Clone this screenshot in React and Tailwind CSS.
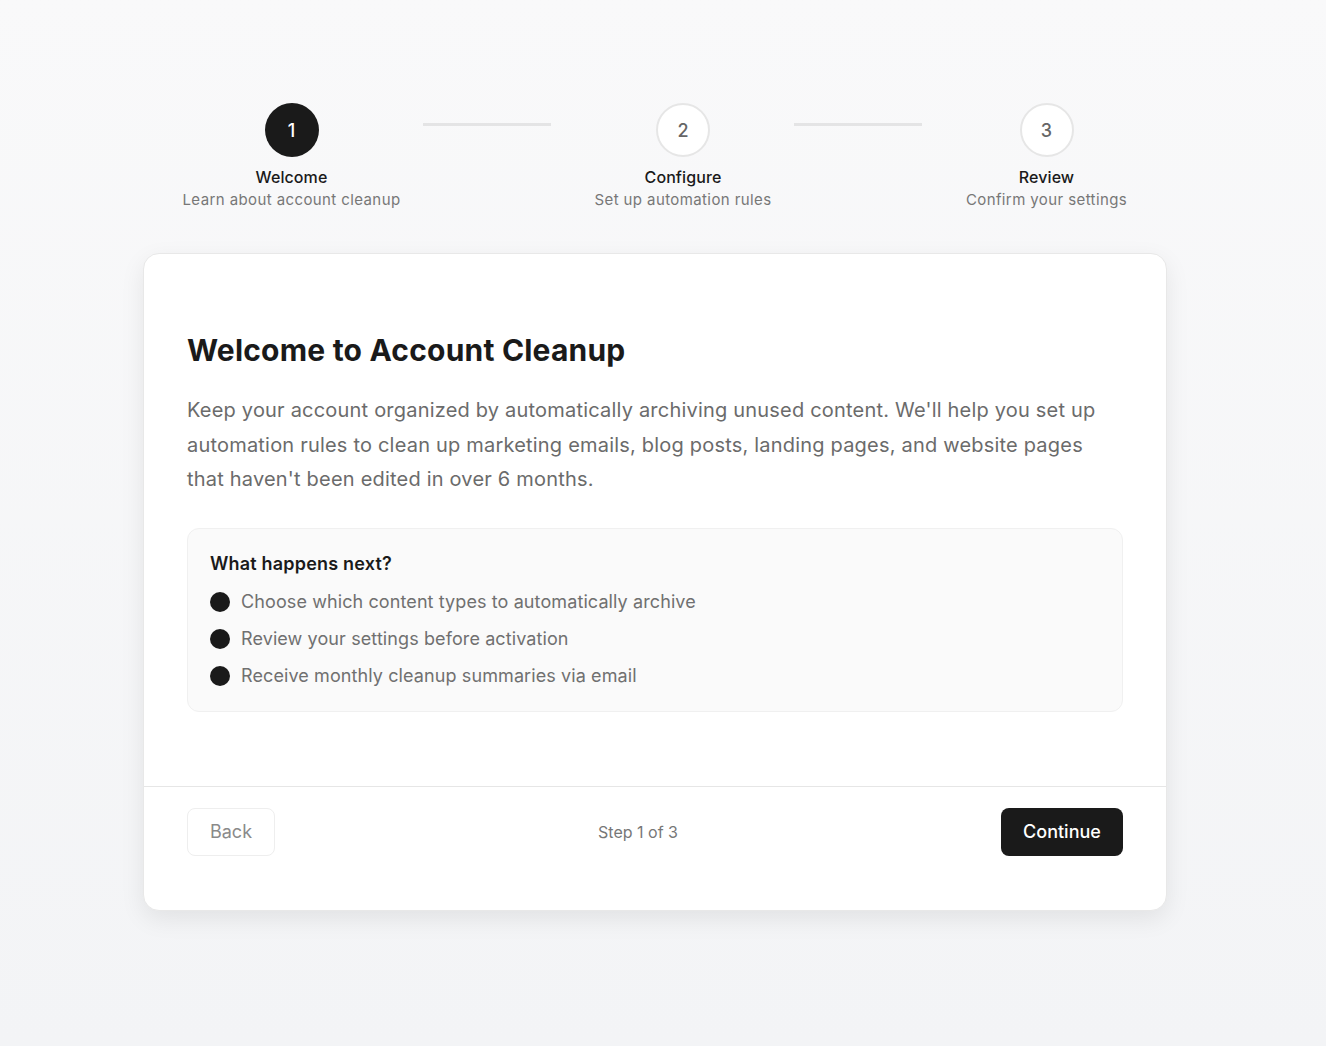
const steps = [
  { n: 1, title: 'Welcome', sub: 'Learn about account cleanup', w: 'w-[219px]' },
  { n: 2, title: 'Configure', sub: 'Set up automation rules', w: 'w-[180px]' },
  { n: 3, title: 'Review', sub: 'Confirm your settings', w: 'w-[163px]' },
];

const nextItems = [
  'Choose which content types to automatically archive',
  'Review your settings before activation',
  'Receive monthly cleanup summaries via email',
];

const Step = ({ step, active }) => (
  <div className={`${step.w} flex flex-col items-center shrink-0`}>
    <div
      className={
        active
          ? 'w-[54px] h-[54px] rounded-full bg-[#1a1a1a] text-white flex items-center justify-center text-[18px] font-medium'
          : 'w-[54px] h-[54px] rounded-full bg-white border-2 border-[#e6e6e6] text-[#666] flex items-center justify-center text-[18px] font-medium'
      }
    >
      {step.n}
    </div>
    <div className="mt-2 text-[16px] leading-6 font-medium text-[#1a1a1a] tracking-[0.1px] whitespace-nowrap">{step.title}</div>
    <div className="mt-px text-[15px] leading-5 text-[#777] tracking-[0.4px] whitespace-nowrap">{step.sub}</div>
  </div>
);

const Connector = ({ className }) => (
  <div className={`w-[128px] h-[3px] bg-[#e4e4e5] mt-[20px] shrink-0 ${className}`} />
);

const App = () => {
  return (
    <div
      className="min-h-[1046px] bg-gradient-to-b from-[#f9f9fa] to-[#f3f4f6] pt-[103px]"
      style={{ fontFamily: 'Inter, "Noto Sans", sans-serif' }}
    >
      <div className="ml-[143px] w-[1024px]">
        {/* stepper */}
        <div className="flex items-start px-[39px]">
          <Step step={steps[0]} active />
          <Connector className="ml-[22px]" />
          <div className="ml-[42px]"><Step step={steps[1]} /></div>
          <Connector className="ml-[21px]" />
          <div className="ml-[43px]"><Step step={steps[2]} /></div>
        </div>

        {/* card */}
        <div className="mt-[43px] bg-white rounded-2xl border border-[#e8e8e8] shadow-[0_8px_24px_rgba(0,0,0,0.08)]">
          <div className="px-[43px] pt-[78px] pb-[74px]">
            <h1 className="text-[30px] leading-9 font-bold text-[#1a1a1a] tracking-[0.2px]">
              Welcome to Account Cleanup
            </h1>
            <p className="mt-[25px] text-[20px] leading-[34.5px] text-[#6b6b6b] tracking-[0.2px]">
              Keep your account organized by automatically archiving unused content. We'll help you set up
              automation rules to clean up marketing emails, blog posts, landing pages, and website pages
              that haven't been edited in over 6 months.
            </p>

            <div className="mt-[31px] bg-[#fafafa] border border-[#f0f0f0] rounded-xl px-[22px] py-[22px]">
              <h3 className="text-[18px] leading-[26px] font-semibold text-[#1a1a1a] tracking-[0.2px]">What happens next?</h3>
              <ul className="mt-3 space-y-[11px]">
                {nextItems.map(item => (
                  <li key={item} className="flex items-center gap-[11px]">
                    <span className="w-5 h-5 rounded-full bg-[#1a1a1a] shrink-0" />
                    <span className="text-[18px] leading-[26px] text-[#707070] tracking-[0.1px]">{item}</span>
                  </li>
                ))}
              </ul>
            </div>
          </div>

          {/* footer */}
          <div className="border-t border-[#e6e6e6] px-[43px] pt-[21px] pb-[54px] flex items-center justify-between">
            <button className="h-12 w-[88px] rounded-lg border border-[#eeeeee] bg-white text-[18px] text-[#8a8a8a]">
              Back
            </button>
            <span className="text-[16px] text-[#777]">Step 1 of 3</span>
            <button className="h-12 w-[122px] rounded-lg bg-[#1a1a1a] text-white text-[18px] font-medium">
              Continue
            </button>
          </div>
        </div>
      </div>
    </div>
  );
};

export default App;
